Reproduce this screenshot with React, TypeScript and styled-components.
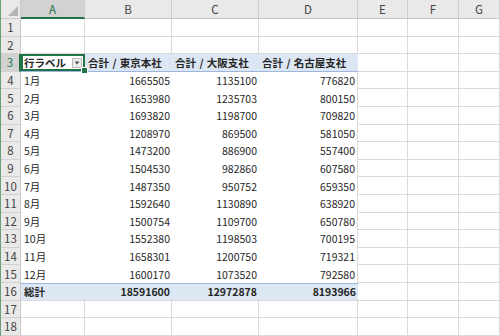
import React from "react";
import styled, { createGlobalStyle, css } from "styled-components";

const GlobalStyle = createGlobalStyle`
  html, body { margin: 0; padding: 0; background: #ffffff; }
  body { width: 500px; height: 336px; overflow: hidden; }
`;

const FONT = `"Noto Sans CJK JP", "Noto Sans", "Liberation Sans", sans-serif`;
const GREEN = "#217346";
const PIVOT_BG = "#dde6f3";
const PIVOT_LINE = "#9eb6dd";
const GRID = "#dadada";

const Sheet = styled.div`
  display: grid;
  grid-template-columns: 20px 64px 87px 87px 99px 50px 51px 1fr;
  grid-template-rows: 19px repeat(18, 17.6px);
  width: 500px;
  height: 336px;
  font-family: ${FONT};
  border-left: 1px solid #6a9f78;
  box-sizing: border-box;
`;

const Corner = styled.div`
  background: #e9e9e9;
  border-right: 1px solid #c8c8c8;
  border-bottom: 1px solid #c8c8c8;
  display: flex;
  align-items: flex-end;
  justify-content: flex-end;
  padding: 0 2px 2px 0;
  box-sizing: border-box;
`;

const ColHeader = styled.div<{ $active?: boolean }>`
  background: ${(p) => (p.$active ? "#d2d2d2" : "#e9e9e9")};
  color: ${(p) => (p.$active ? GREEN : "#444")};
  border-right: 1px solid #cdcdcd;
  border-bottom: ${(p) => (p.$active ? `2px solid ${GREEN}` : "1px solid #c8c8c8")};
  font-size: 11.5px;
  display: flex;
  align-items: center;
  justify-content: center;
  box-sizing: border-box;
  padding-top: ${(p) => (p.$active ? "1px" : "0")};
`;

const RowHeader = styled.div<{ $active?: boolean }>`
  background: ${(p) => (p.$active ? "#d2d2d2" : "#e9e9e9")};
  color: ${(p) => (p.$active ? GREEN : "#444")};
  border-right: ${(p) => (p.$active ? `2px solid ${GREEN}` : "1px solid #c8c8c8")};
  border-bottom: 1px solid #d0d0d0;
  font-size: 11.5px;
  display: flex;
  align-items: center;
  justify-content: center;
  box-sizing: border-box;
`;

type Variant = "grid" | "pivot" | "pivotHead" | "pivotTotal" | "pivotEdge";

const Cell = styled.div<{ $variant: Variant; $right?: boolean; $bold?: boolean; $selected?: boolean }>`
  position: relative;
  box-sizing: border-box;
  font-size: 10.5px;
  color: #262626;
  font-weight: ${(p) => (p.$bold ? 700 : 400)};
  display: flex;
  align-items: center;
  justify-content: ${(p) => (p.$right ? "flex-end" : "flex-start")};
  padding: 0 2px 0 3px;
  white-space: nowrap;
  overflow: visible;
  ${(p) =>
    p.$variant === "grid" &&
    css`
      border-right: 1px solid ${GRID};
      border-bottom: 1px solid ${GRID};
    `}
  ${(p) =>
    p.$variant === "pivot" &&
    css`
      background: #ffffff;
    `}
  ${(p) =>
    p.$variant === "pivotEdge" &&
    css`
      background: #ffffff;
      border-right: 1px solid ${GRID};
    `}
  ${(p) =>
    p.$variant === "pivotHead" &&
    css`
      background: ${PIVOT_BG};
      border-bottom: 1px solid ${PIVOT_LINE};
      word-spacing: 1px;
    `}
  ${(p) =>
    p.$variant === "pivotTotal" &&
    css`
      background: ${PIVOT_BG};
      border-top: 1px solid ${PIVOT_LINE};
      border-bottom: 1px solid ${GRID};
    `}
  ${(p) =>
    p.$selected &&
    css`
      box-shadow: inset 0 0 0 2px ${GREEN};
      background: #ffffff;
    `}
`;

const FillHandle = styled.span`
  position: absolute;
  right: -3px;
  bottom: -3px;
  width: 5px;
  height: 5px;
  background: ${GREEN};
  border: 1px solid #ffffff;
  z-index: 2;
`;

const DropButton = styled.span`
  position: absolute;
  right: 3px;
  top: 4px;
  width: 10px;
  height: 10px;
  box-sizing: border-box;
  background: #eeeeee;
  border: 1px solid #b8b8b8;
  display: flex;
  align-items: center;
  justify-content: center;
`;

const data: [string, number, number, number][] = [
  ["1月", 1665505, 1135100, 776820],
  ["2月", 1653980, 1235703, 800150],
  ["3月", 1693820, 1198700, 709820],
  ["4月", 1208970, 869500, 581050],
  ["5月", 1473200, 886900, 557400],
  ["6月", 1504530, 982860, 607580],
  ["7月", 1487350, 950752, 659350],
  ["8月", 1592640, 1130890, 638920],
  ["9月", 1500754, 1109700, 650780],
  ["10月", 1552380, 1198503, 700195],
  ["11月", 1658301, 1200750, 719321],
  ["12月", 1600170, 1073520, 792580],
];

const cols = ["A", "B", "C", "D", "E", "F", "G"];

function EmptyTail({ from }: { from: number }) {
  return (
    <>
      {cols.slice(from).map((c) => (
        <Cell key={c} $variant="grid" />
      ))}
    </>
  );
}

export default function App() {
  return (
    <>
      <GlobalStyle />
      <Sheet>
        <Corner>
          <svg width="10" height="10" viewBox="0 0 10 10">
            <polygon points="10,0 10,10 0,10" fill="#b4b4b4" />
          </svg>
        </Corner>
        {cols.map((c) => (
          <ColHeader key={c} $active={c === "A"}>
            {c}
          </ColHeader>
        ))}

        <RowHeader>1</RowHeader>
        <EmptyTail from={0} />
        <RowHeader>2</RowHeader>
        <EmptyTail from={0} />

        <RowHeader $active>3</RowHeader>
        <Cell $variant="pivotHead" $bold $selected>
          行ラベル
          <DropButton>
            <svg width="6" height="4" viewBox="0 0 6 4">
              <polygon points="0.5,0.5 5.5,0.5 3,3.5" fill="#555" />
            </svg>
          </DropButton>
          <FillHandle />
        </Cell>
        <Cell $variant="pivotHead" $bold>合計 / 東京本社</Cell>
        <Cell $variant="pivotHead" $bold>合計 / 大阪支社</Cell>
        <Cell $variant="pivotHead" $bold>合計 / 名古屋支社</Cell>
        <EmptyTail from={4} />

        {data.map(([m, a, b, c], i) => (
          <React.Fragment key={m}>
            <RowHeader>{i + 4}</RowHeader>
            <Cell $variant="pivot">{m}</Cell>
            <Cell $variant="pivot" $right>{a}</Cell>
            <Cell $variant="pivot" $right>{b}</Cell>
            <Cell $variant="pivotEdge" $right>{c}</Cell>
            <EmptyTail from={4} />
          </React.Fragment>
        ))}

        <RowHeader>16</RowHeader>
        <Cell $variant="pivotTotal" $bold>総計</Cell>
        <Cell $variant="pivotTotal" $bold $right>18591600</Cell>
        <Cell $variant="pivotTotal" $bold $right>12972878</Cell>
        <Cell $variant="pivotTotal" $bold $right>8193966</Cell>
        <EmptyTail from={4} />

        <RowHeader>17</RowHeader>
        <EmptyTail from={0} />
        <RowHeader>18</RowHeader>
        <EmptyTail from={0} />
      </Sheet>
    </>
  );
}
